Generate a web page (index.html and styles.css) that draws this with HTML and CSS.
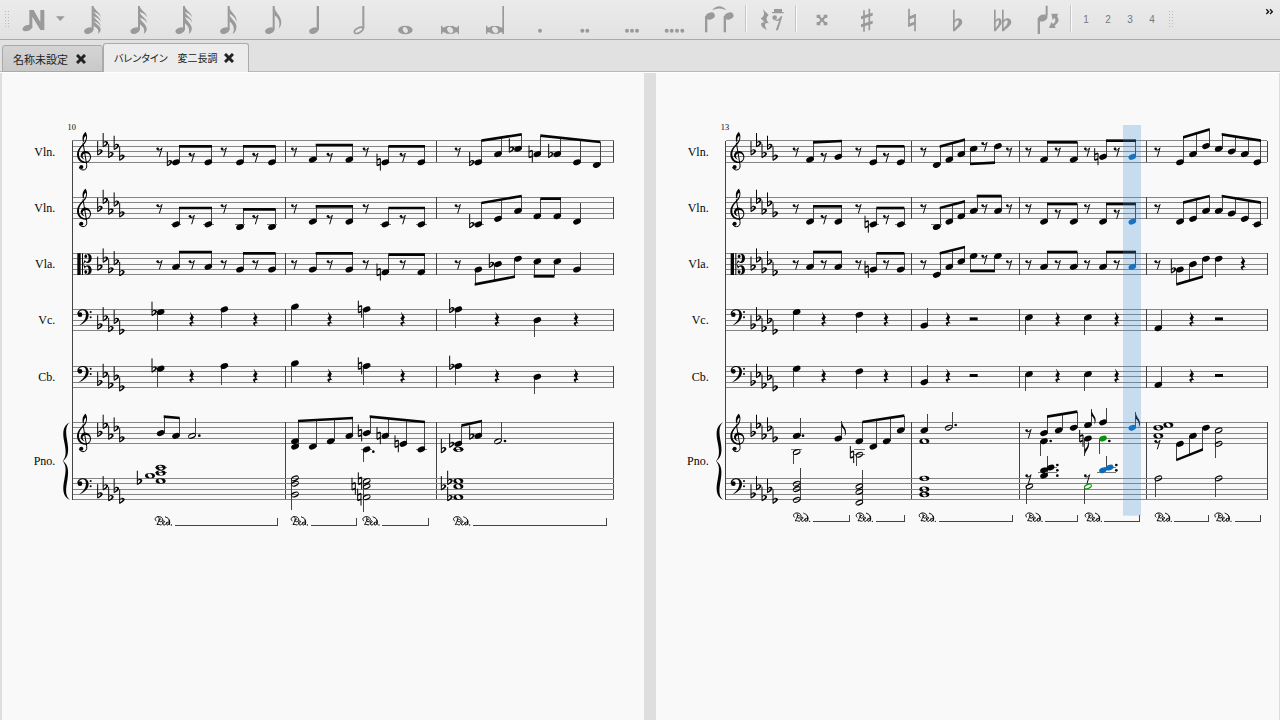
FILE: index.html
```
<!DOCTYPE html>
<html lang="ja">
<head>
	<meta charset="utf-8">
	<title>バレンタイン 変二長調</title>
	<link rel="stylesheet" href="styles.css">
</head>

<body>
<!-- shared glyphs, three units to a pixel -->
<svg class="glyphs" aria-hidden="true">
	<symbol id="treble" overflow="visible">
		<path class="line" stroke-width="3" d="M-3,6 L8,72 C10,83 4,88 -3,88 C-9,88 -14,84 -14,79"/>
		<path d="M-3,3 C-7,-11 -2,-22 5,-26 C12,-15 10,0 2,9 C-6,18 -15,26 -15,41 C-15,55 -5,63 5,63 C14,63 18,57 18,50 C18,42 12,38 6,38 C-1,38 -5,43 -4,48 C-3,53 0,55 3,57 C-6,55 -11,49 -10,43 C-9,35 -2,30 6,31 C15,32 21,39 21,49 C21,59 14,67 3,67 C-10,67 -21,56 -21,42 C-21,26 -10,17 -3,9 C4,2 8,-7 6,-14 C0,-12 -1,-4 0,3 Z"/>
		<circle cx="-8" cy="79" r="6"/>
	</symbol>
	<symbol id="bass" overflow="visible">
		<circle cx="-12" cy="16" r="7"/>
		<path d="M-20,15 C-20,3 -9,-1 -2,0 C9,1 14,8 14,18 C13,34 -1,44 -18,50 C-4,41 5,31 6,16 C6,7 2,3 -4,3 C-11,3 -16,8 -17,15 Z"/>
		<circle cx="20" cy="8" r="3"/><circle cx="20" cy="24" r="3"/>
	</symbol>
	<symbol id="alto" overflow="visible">
		<path d="M-20,0 h10 v65 h-10z M-6,0 h3 v65 h-3z"/>
		<path id="alto-half" d="M1,9 C3,-2 23,-3 23,14 C23,28 11,33 4,26 L-3,33 L2,19 C7,29 14,27 14,14 C14,3 9,1 6,4 C12,7 10,14 5,14 C2,14 1,12 1,9z"/>
		<use href="#alto-half" transform="translate(0,65) scale(1,-1)"/>
	</symbol>
	<symbol id="flat" overflow="visible">
		<path class="line" stroke-width="3" d="M-6,-31 V11"/>
		<path d="M-6,-2 C-2,-9 9,-8 9,-1 C9,4 0,9 -6,12 V8 C-1,5 3,2 3,-1 C3,-5 -3,-4 -6,2z"/>
	</symbol>
	<symbol id="natural" overflow="visible">
		<path class="line" stroke-width="3" d="M-5,-26 V10 M5,-11 V25"/>
		<path class="line" stroke-width="5" d="M-5,-7 L5,-11 M-5,10 L5,6"/>
	</symbol>
	<symbol id="rest8" overflow="visible">
		<circle cx="-5" cy="-8" r="4"/>
		<path class="line" stroke-width="3" d="M-6,-5 C0,-2 5,-6 8,-11 L0,16"/>
	</symbol>
	<symbol id="rest4" overflow="visible">
		<path d="M-4,-23 L7,-8 C1,-1 1,4 9,11 C0,8 -4,12 2,20 C-9,15 -10,4 1,6 L-7,-5 C-1,-10 0,-15 -5,-22z"/>
	</symbol>
	<symbol id="head" overflow="visible"><ellipse rx="12" ry="8" transform="rotate(-24)"/></symbol>
	<symbol id="halfhead" overflow="visible"><path fill-rule="evenodd" transform="rotate(-24)" d="M-12,0 a12,8 0 1,0 24,0 a12,8 0 1,0 -24,0z M-10,0 a10,4 0 1,0 20,0 a10,4 0 1,0 -20,0z"/></symbol>
	<symbol id="whole" overflow="visible"><path fill-rule="evenodd" d="M-15,0 a15,8 0 1,0 30,0 a15,8 0 1,0 -30,0z M-7,-3 C-5,-9 5,-7 7,3 C5,9 -6,7 -7,-3z"/></symbol>
	<symbol id="flag" overflow="visible"><path d="M0,0 C2,17 13,21 13,34 C13,40 11,44 9,47 C13,31 5,23 0,20z"/></symbol>
	<symbol id="ped" overflow="visible">
		<path class="line" stroke-width="3" d="M4,-13 C-2,-16 0,-25 9,-26 C19,-27 26,-20 22,-14 C19,-9 12,-10 12,-15 C12,-19 17,-20 19,-17 M11,-24 C16,-16 8,-8 6,-2 C10,-6 15,1 20,-2"/>
		<path class="line" stroke-width="3" d="M22,-6 C27,-6 31,-12 27,-14 C21,-13 21,0 28,-1 C32,-2 34,-6 36,-10 M43,-8 C38,-14 33,-5 36,-1 C41,1 45,-9 42,-17 C40,-23 34,-23 30,-26 M42,-17 C46,-12 43,-4 43,-1"/>
		<circle cx="49" cy="-1" r="2"/>
	</symbol>
	<symbol id="bigflag" overflow="visible"><path d="M0,0 C3,14 22,20 22,34 C17,25 9,20 0,18z"/></symbol>
</svg>

<div class="toolbar" role="toolbar" aria-label="音符入力">
	<span class="grip"></span>
	<button class="input-mode" aria-label="音符入力モード"><svg viewBox="0 0 105 120"><ellipse cx="34" cy="84" rx="15" ry="9" transform="rotate(-20 34 84)"/><path d="M40,30 H53 L73,66 V30 H85 V90 H73 L49,50 V84 H40z"/></svg></button>
	<button class="arrow" aria-label="入力方法"><svg viewBox="0 0 54 120"><path d="M15,49 H41 L28,63z"/></svg></button>
	<button class="tool" aria-label="64分音符"><svg viewBox="0 0 135 120"><ellipse cx="59" cy="92" rx="14" ry="9" transform="rotate(-20 59 92)"/><path d="M68,18 h6 v72 h-6z"/><use href="#bigflag" x="73" y="17"/><use href="#bigflag" x="73" y="31"/><use href="#bigflag" x="73" y="45"/><path d="M73,59 C78,72 98,78 95,91 Q94,98 87,102 C92,86 80,82 73,77z"/></svg></button>
	<button class="tool" aria-label="32分音符"><svg viewBox="0 0 135 120"><ellipse cx="63" cy="92" rx="14" ry="9" transform="rotate(-20 63 92)"/><path d="M72,18 h6 v72 h-6z"/><use href="#bigflag" x="77" y="18"/><use href="#bigflag" x="77" y="35"/><path d="M77,52 C80,66 102,76 98,90 Q97,98 89,102 C96,84 81,76 77,72z"/></svg></button>
	<button class="tool" aria-label="16分音符"><svg viewBox="0 0 135 120"><ellipse cx="63" cy="92" rx="14" ry="9" transform="rotate(-20 63 92)"/><path d="M72,18 h6 v72 h-6z"/><use href="#bigflag" x="77" y="18"/><use href="#bigflag" x="77" y="33"/><path d="M77,48 C80,63 102,73 98,89 Q97,98 89,102 C96,84 81,73 77,69z"/></svg></button>
	<button class="tool" aria-label="8分音符（付き）"><svg viewBox="0 0 135 120"><ellipse cx="62" cy="92" rx="14" ry="9" transform="rotate(-20 62 92)"/><path d="M71,18 h6 v72 h-6z"/><path d="M76,20 C78,37 99,43 98,65 C92,50 83,44 76,41z M76,42 C79,58 101,66 97,84 Q95,97 86,102 C97,81 81,68 76,64z"/></svg></button>
	<button class="tool" aria-label="8分音符"><svg viewBox="0 0 135 120"><ellipse cx="62" cy="92" rx="14" ry="9" transform="rotate(-20 62 92)"/><path d="M71,18 h6 v72 h-6z"/><path d="M76,20 C78,38 97,46 97,68 Q97,77 89,86 C97,64 84,50 76,46z"/></svg></button>
	<button class="tool" aria-label="4分音符"><svg viewBox="0 0 135 120"><ellipse cx="59" cy="92" rx="14" ry="9" transform="rotate(-20 59 92)"/><path d="M68,18 h7 v72 h-7z"/></svg></button>
	<button class="tool" aria-label="2分音符"><svg viewBox="0 0 135 120"><ellipse class="ring" cx="59" cy="91" rx="14" ry="7" transform="rotate(-28 59 91)"/><path d="M70,18 h6 v68 h-6z"/></svg></button>
	<button class="tool" aria-label="全音符"><svg viewBox="0 0 135 120"><path fill-rule="evenodd" d="M42,90 a22,13 0 1,0 44,0 a22,13 0 1,0 -44,0z M56,87 C58,76 70,81 72,92 C70,104 58,99 56,87z"/></svg></button>
	<button class="tool" aria-label="倍全音符"><svg viewBox="0 0 135 120"><path fill-rule="evenodd" d="M36,77 h4 v5 Q49,83 53,78 H73 Q77,83 86,82 v-5 h4 v25 h-4 v-5 Q77,95 73,101 H53 Q49,95 40,97 v5 h-4z M54,87 C55,77 70,78 73,92 C71,103 56,101 54,87z"/></svg></button>
	<button class="tool" aria-label="ロンガ"><svg viewBox="0 0 135 120"><path fill-rule="evenodd" d="M36,77 h4 v5 Q49,83 53,78 H73 Q77,83 85,82 V18 h5 V102 h-5 v-5 Q77,95 73,101 H53 Q49,95 40,97 v5 h-4z M54,87 C55,77 70,78 73,92 C71,103 56,101 54,87z"/></svg></button>
	<button class="tool" aria-label="付点"><svg viewBox="0 0 135 120"><circle cx="63" cy="92" r="6"/></svg></button>
	<button class="tool" aria-label="複付点"><svg viewBox="0 0 135 120"><circle cx="55" cy="92" r="6"/><circle cx="70" cy="92" r="6"/></svg></button>
	<button class="tool" aria-label="三重付点"><svg viewBox="0 0 135 120"><circle cx="54" cy="92" r="6"/><circle cx="69" cy="92" r="6"/><circle cx="84" cy="92" r="6"/></svg></button>
	<button class="tool" aria-label="四重付点"><svg viewBox="0 0 135 120"><circle cx="38" cy="92" r="6"/><circle cx="53" cy="92" r="6"/><circle cx="69" cy="92" r="6"/><circle cx="85" cy="92" r="6"/></svg></button>
	<button class="tool" aria-label="タイ"><svg viewBox="0 0 135 120"><ellipse cx="34" cy="48" rx="14" ry="10" transform="rotate(-20 34 48)"/><ellipse cx="90" cy="48" rx="14" ry="10" transform="rotate(-20 90 48)"/><path d="M18,48 h7 v49 h-7z M74,48 h7 v49 h-7z M39,31 Q60,7 83,31 Q61,20 39,31z"/></svg></button>
	<span class="sep"></span>
	<button class="tool" aria-label="休符"><svg viewBox="0 0 135 120"><path d="M41,27 L59,45 C50,54 51,60 60,70 C47,66 44,74 54,90 C34,83 30,65 47,67 L35,55 C46,48 48,40 41,27z M75,27 h24 v9 h5 v4 h-35 v-4 h6z"/><circle cx="77" cy="53" r="7"/><path d="M76,60 C84,62 91,57 95,49 h5 L87,91 h-7 L91,61 Q85,66 76,60z"/></svg></button>
	<span class="sep"></span>
	<button class="tool" aria-label="ダブルシャープ"><svg viewBox="0 0 135 120"><path d="M53,44 h11 v6 l5,5 5,-5 v-6 h11 v10 h-6 l-5,6 5,6 h6 v10 h-11 v-6 l-5,-6 -5,6 v6 h-11 v-10 h6 l5,-6 -5,-6 h-6z"/></svg></button>
	<button class="tool" aria-label="シャープ"><svg viewBox="0 0 135 120"><path class="ring" d="M60,31 V95 M76,26 V91"/><path d="M51,49 L86,38 V47 L51,58z M51,73 L86,62 V71 L51,82z"/></svg></button>
	<button class="tool" aria-label="ナチュラル"><svg viewBox="0 0 135 120"><path class="ring" d="M60,26 V79 M78,42 V94"/><path d="M58,50 L80,42 V51 L58,59z M58,72 L80,64 V73 L58,81z"/></svg></button>
	<button class="tool" aria-label="フラット"><svg viewBox="0 0 135 120"><path fill-rule="evenodd" d="M57,29 h5 v32 C68,51 85,53 85,66 C84,78 70,84 62,94 h-5z M62,69 V84 C69,78 74,71 74,65 C73,58 65,61 62,69z"/></svg></button>
	<button class="tool" aria-label="ダブルフラット"><svg viewBox="0 0 135 120"><path fill-rule="evenodd" d="M45,29 h5 v32 C56,51 68,53 68,66 C67,78 56,84 50,94 h-5z M50,69 V84 C56,78 60,71 60,65 C59,58 52,61 50,69z"/><path fill-rule="evenodd" d="M69,29 h5 v32 C80,51 97,53 97,66 C96,78 82,84 74,94 h-5z M74,69 V84 C81,78 86,71 86,65 C85,58 77,61 74,69z"/></svg></button>
	<button class="tool" aria-label="符幹の反転"><svg viewBox="0 0 135 120"><ellipse cx="56" cy="54" rx="15" ry="10" transform="rotate(-20 56 54)"/><path d="M41,54 h7 v48 h-7z M65,17 h6 v30 h-6z M82,41 L103,41 99,49 Q112,62 92,77 L95,84 L75,84 L82,67 L87,72 Q99,63 91,54 L86,60z"/></svg></button>
	<span class="sep"></span>
	<button class="voice">1</button>
	<button class="voice">2</button>
	<button class="voice">3</button>
	<button class="voice">4</button>
	<span class="grip grip-end"></span>
	<button class="more" aria-label="さらに表示"><svg viewBox="0 0 36 30"><path d="M7,7 L14,14 L7,21 M18,7 L25,14 L18,21"/></svg></button>
</div>

<div class="tabs" role="tablist">
	<div class="tab">
		<button class="tab-name" role="tab">名称未設定</button>
		<button class="close" aria-label="閉じる"><svg viewBox="0 0 10 10"><path d="M1,1 L9,9 M9,1 L1,9"/></svg></button>
	</div>
	<div class="tab active">
		<button class="tab-name" role="tab" aria-selected="true">バレンタイン　変二長調</button>
		<button class="close" aria-label="閉じる"><svg viewBox="0 0 10 10"><path d="M1,1 L9,9 M9,1 L1,9"/></svg></button>
	</div>
</div>

<main class="view">
	<section class="page page-left"><svg id="page1" class="score" viewBox="6 219 1926 1941"></svg></section>
	<section class="page page-right"><svg id="page2" class="score" viewBox="1968 219 1869 1941"></svg></section>
</main>

<script src="score.js"></script>
</body>
</html>
```
FILE: styles.css
```
* {
	box-sizing: border-box;
}
body {
	margin: 0;
	height: 100vh;
	display: flex;
	flex-direction: column;
	overflow: hidden;
	background-color: #dedede;
	font-family: "Noto Sans CJK JP", sans-serif;
	color: #222;
}
button {
	margin: 0;
	padding: 0;
	border: 0;
	background: none;
	font: inherit;
	color: inherit;
}
.glyphs {
	position: absolute;
	width: 0;
	height: 0;
}

/* toolbar */
.toolbar {
	display: flex;
	flex: none;
	height: 40px;
	align-items: stretch;
	background: linear-gradient(#ebebeb, #e2e2e2);
	border-bottom: 1px solid #a9a9a9;
	color: #9a9a9a;
}
.toolbar svg {
	display: block;
	height: 40px;
	width: 100%;
	fill: currentColor;
}
.toolbar .ring {
	fill: none;
	stroke: currentColor;
	stroke-width: 5px;
}
.grip {
	width: 6px;
	height: 18px;
	margin: 10px 6px 0 4px;
	background-image: radial-gradient(circle, #bbb 1px, transparent 1px);
	background-size: 3px 3px;
}
.grip-end {
	margin-left: 6px;
}
.input-mode {
	width: 35px;
}
.arrow {
	width: 18px;
}
.tool {
	width: 45px;
	flex: none;
}
.sep {
	width: 2px;
	height: 27px;
	margin: 5px 2px 0 1px;
	background-color: #fafafa;
	border-left: 1px solid #c6c6c6;
}
.voice {
	width: 22px;
	height: 38px;
	flex: none;
	padding-left: 2px;
	font-family: "Liberation Sans", sans-serif;
	font-size: 10px;
	color: #777;
}
.toolbar .more {
	width: 16px;
	margin-left: auto;
}
.toolbar .more svg {
	width: 12px;
	height: 10px;
	margin-bottom: 15px;
	fill: none;
	stroke: #111;
	stroke-width: 4px;
}

/* document tabs */
.tabs {
	display: flex;
	flex: none;
	height: 33px;
	align-items: flex-end;
	padding-left: 2px;
	background-color: #e1e1e1;
	border-bottom: 1px solid #fff;
	box-shadow: inset 0 -1px #b8b8b8;
}
.tab {
	display: flex;
	align-items: center;
	gap: 8px;
	height: 27px;
	padding: 0 16px 0 10px;
	border: 1px solid #aaa;
	border-radius: 3px 3px 0 0;
	background: linear-gradient(#d4d4d4, #c9c9c9);
}
.tab.active {
	height: 29px;
	padding-right: 14px;
	border-bottom: 0;
	background: #ececec;
}
.tab-name {
	font-size: 11px;
	line-height: 16px;
	font-feature-settings: "palt";
	white-space: nowrap;
}
.active .tab-name {
	font-size: 10px;
}
.close svg {
	display: block;
	width: 10px;
	height: 10px;
	fill: none;
	stroke: #222;
	stroke-width: 3px;
}
.active {
	gap: 6px;
}

/* score pages */
.view {
	display: flex;
	flex: 1;
	min-height: 0;
	gap: 12px;
	padding: 0 1px 0 2px;
}
.page {
	min-width: 0;
	overflow: hidden;
	background-color: #f9f9f9;
}
.page-left {
	flex: 642;
}
.page-right {
	flex: 623;
}
.score {
	display: block;
	width: 100%;
	fill: currentColor;
	color: #050505;
}
.line {
	fill: none;
	stroke: currentColor;
}
.staff {
	stroke: #858585;
	stroke-width: 3px;
	shape-rendering: crispEdges;
}
.bar, .stem, .ledger, .pedal {
	fill: none;
	stroke: #444;
	stroke-width: 3px;
	shape-rendering: crispEdges;
}
.ledger {
	stroke: #777;
}
.playing {
	color: #0c68b8;
	fill: currentColor;
}
.picked {
	color: #0a930a;
	fill: currentColor;
}
.part {
	font-family: "Liberation Serif", serif;
	font-size: 36px;
	text-anchor: end;
}
.number {
	font-family: "Liberation Serif", serif;
	font-size: 25px;
	text-anchor: middle;
}
.cursor {
	fill: #4493d6;
	fill-opacity: .27;
}
```
FILE: score.js
```
// Three units to a pixel. Steps count down from the top line of a staff.
var TOPS = [422, 592, 760, 928, 1098, 1267, 1435];
var STEP = 8.1;
var CLEFS = ["treble", "treble", "alto", "bass", "bass", "treble", "bass"];
var KEY = { treble: [4, 1, 5, 2, 6], alto: [5, 2, 6, 3, 7], bass: [6, 3, 7, 4, 8] };
var NAMES = ["Vln.", "Vln.", "Vla.", "Vc.", "Cb."];

/* @ n            x offset for what follows
   r8 x step, r4 x, r2 x    rests
   beam u|d y1 y2 notes     notes under one beam
   q|e|h u|d y notes        stem ending at y
   w notes, flat/nat x step, dot x y
   a note is x:step+step, then b/n for an accidental, * playing, ~ picked */
var low1 = "@60;q d 64 422:1b;r4 515;q d 57 613:0;r4 706;q d 50 825:-1;r4 929;@960;r4 29;q d 57 140:0n;r4 248;q d 57 415:0b;r4 531;q d 83 652:4;r4 768".replace("r4 29;", "");
var low2 = "@2040;q d 64 350:1;r4 431;q d 70 538:2;r4 618;q u -4 733:6;r4 804;r2 881;@2940;q d 76 147:3;r4 233;q d 76 324:3;r4 410;q u 2 535:7;r4 635;r2 717";

var PAGES = [
	{
		id: "page1", left: 217, number: 10, bars: [856, 1309, 1841], pedalY: 1576,
		pedals: [[465, 525, 833], [873, 933, 1068], [1088, 1147, 1286], [1360, 1420, 1819]],
		staves: [
			"@60;r8 418 4;beam u 17 17 468:8b 565:8;r8 515 6;r8 611 4;beam u 17 17 660:8 756:8;r8 706 6;r8 822 4;beam u 13 13 878:7 988:7;r8 929 6;@960;r8 137 4;beam u 17 17 196:8n 304:8;r8 248 6;r8 413 4;beam u 0 -19 475:8b 534:5 594:3b;beam u -15 4 652:5n 712:5b 771:8 830:9",
			"@60;r8 418 4;beam u 32 32 468:10 565:10;r8 515 8;r8 611 4;beam u 36 36 660:11 756:11;r8 706 8;r8 822 4;beam u 27 27 878:9 988:9;r8 929 8;@960;r8 137 4;beam u 32 32 196:10 304:10;r8 248 8;r8 413 4;beam u 17 -4 475:10b 534:8 594:5;beam u 4 4 652:7 712:7;q u 16 771:9",
			"@60;r8 418 4;beam u -4 -4 468:5 565:5;r8 515 4;r8 611 4;beam u 0 0 660:6 756:6;r8 706 4;r8 822 4;beam u 0 0 878:6 988:6;r8 929 4;@960;r8 137 4;beam u 4 4 196:7n 304:7;r8 248 4;r8 413 4;beam d 93 70 475:6 534:4b 594:2;beam d 69 69 652:3 712:3;q u -5 771:6",
			low1,
			low1,
			"@60;beam u -17 -13 422:4 468:5;h u -12 516:5;dot 538 40;beam u -4 -13 825:7+9 878:9 932:7 988:5;@960;beam u -17 -1 140:4n 196:5n 250:8n 304:10;q d 119 140:10;dot 160 88;beam u 10 -4 415:8b 475:5b;w 415:10;flat 370 10;h u 0 534:7;dot 555 56",
			"@60;w 422:-4+-2+1;w 390:-1;flat 358 1;h d 95 825:0+2+6;@960;h d 101 140:1+3+7;nat 120 1;nat 101 3;nat 118 7;w 415:1+3+7;flat 389 1;flat 370 3;flat 389 7"
		]
	},
	{
		id: "page2", left: 2177, number: 13, bars: [2735, 3059, 3440, 3802], pedalY: 1565,
		pedals: [[2380, 2439, 2547], [2568, 2627, 2712], [2757, 2817, 3036], [3077, 3136, 3233], [3255, 3313, 3418], [3465, 3522, 3625], [3644, 3704, 3780]],
		staves: [
			"@2040;r8 347 4;beam u 5 1 390:7 475:6;r8 431 6;r8 535 4;beam u 17 17 580:8 662:8;r8 618 6;r8 730 4;beam u 18 -3 770:9 808:7 844:5;beam d 70 66 881:3 954:2;@2940;r8 13 2;r8 87 4;r8 145 4;beam u 5 5 192:7 281:7;r8 233 4;r8 321 4;beam u 0 0 369:6n 457:6*;r8 410 4;r8 532 4;beam u -10 -34 600:8 639:5 678:2;beam u -19 0 716:3 755:4 794:5 832:8",
			"@2040;r8 347 4;beam u 27 27 390:9 475:9;r8 431 8;r8 535 4;beam u 32 32 580:10n 662:10;r8 618 8;r8 730 4;beam u 32 12 770:11 808:9 844:7;beam u -4 -4 881:5 954:5;@2940;r8 13 4;r8 87 4;r8 145 4;beam u 20 20 192:9 281:9;r8 233 6;r8 321 4;beam u 20 20 369:9 457:9*;r8 410 6;r8 532 4;beam u 16 -4 600:9 639:8 678:5;beam u -4 16 716:5 755:6 794:8 832:10",
			"@2040;r8 347 4;beam u -4 -4 390:5 475:5;r8 431 4;r8 535 4;beam u 0 0 580:6n 662:6;r8 618 4;r8 730 4;beam u 0 -19 770:8 808:5 844:3;beam d 53 53 881:1 954:1;@2940;r8 13 2;r8 87 4;r8 145 4;beam u -4 -4 192:5 281:5;r8 233 4;r8 321 4;beam u -4 -4 369:5 457:5*;r8 410 4;r8 532 4;beam d 93 70 600:6b 639:4 678:2;q d 70 716:2;r4 789",
			low2,
			low2,
			"@2040;q u -12 350:5;dot 369 40;h d 124 350:11;e u -5 475:6;beam u -1 -20 538:7 580:9 620:7 662:3;h d 132 538:12;nat 516 12;q u -25 733:3;w 733:7;h u -31 806:2;dot 827 8;@2940;r8 145 4;beam u -17 -32 192:4 236:3 281:2;q d 100 192:7;dot 212 56;e u -40 324:1;q u -43 369:0;e d 101 324:6n;q d 95 369:6~;dot 388 56;e u -31 457:2*;w 535:2+5;w 565:1;r8 532 8;beam d 113 81 600:8 639:5 678:2;h d 106 716:3+8",
			"@2040;h u -30 350:2+4+8;h u -24 538:3+5+9;w 733:0+4+6;@2940;r8 145 0;h d 77 148:3;q u -66 192:-1+-3;q u -66 212:-4;dot 232 -40;dot 232 -24;dot 232 -8;r8 321 0;h d 77 324:3~;q u -66 369:-3*;q u -66 389:-4*;dot 409 -40;dot 409 -24;h d 57 535:0;h d 57 716:0"
		]
	}
];

var HEADS = { q: "head", e: "head", h: "halfhead", w: "whole" };

function line(cls, x1, y1, x2, y2) {
	return '<path class="' + cls + '" d="M' + x1 + ',' + y1 + ' L' + x2 + ',' + y2 + '"/>';
}
function glyph(id, x, y, cls) {
	return '<use href="#' + id + '" x="' + x + '" y="' + y + '"' + (cls ? ' class="' + cls + '"' : '') + '/>';
}
function readNote(text, off) {
	var m = text.match(/^(\d+):([-+\d]+)([bn]?)([*~]?)$/);
	return {
		x: +m[1] + off,
		steps: m[2].split(/\+/).map(Number),
		acc: m[3],
		cls: m[4] == "*" ? "playing" : m[4] == "~" ? "picked" : ""
	};
}
function heads(n, kind, top) {
	var out = "";
	n.steps.forEach(function (p) {
		var i;
		for (i = 10; i <= p; i += 2) out += line("ledger", n.x - 16, top + i * STEP, n.x + 16, top + i * STEP);
		for (i = -2; i >= p; i -= 2) out += line("ledger", n.x - 18, top + i * STEP, n.x + 18, top + i * STEP);
		out += glyph(HEADS[kind], n.x, top + p * STEP, n.cls);
		if (n.acc) out += glyph(n.acc == "b" ? "flat" : "natural", n.x - 20, top + p * STEP);
	});
	return out;
}
// the stem starts at the head farthest from its end
function stem(n, dir, top, end) {
	var p = dir == "u" ? Math.max.apply(null, n.steps) : Math.min.apply(null, n.steps);
	var x = n.x + (dir == "u" ? 10 : -10);
	return line("stem", x, top + p * STEP, x, end);
}
function beam(w, off, top) {
	var dir = w[1], y1 = top + +w[2], y2 = top + +w[3];
	var notes = w.slice(4).map(function (t) { return readNote(t, off); });
	var d = dir == "u" ? 10 : -10;
	var a = notes[0].x + d, b = notes[notes.length - 1].x + d;
	var out = "";
	notes.forEach(function (n) {
		out += stem(n, dir, top, y1 + (y2 - y1) * (n.x + d - a) / (b - a)) + heads(n, "q", top);
	});
	a -= 1;
	b += 1;
	return out + '<path d="M' + a + ',' + (y1 - 4) + ' L' + b + ',' + (y2 - 4) + ' V' + (y2 + 4) + ' L' + a + ',' + (y1 + 4) + 'z"/>';
}
function drawStaff(text, top) {
	var off = 0, out = "";
	text.split(";").forEach(function (item) {
		var w = item.split(" "), c = w[0], x = +w[1] + off, n, end;
		if (c.charAt(0) == "@") off = +c.slice(1);
		else if (c == "r8") out += glyph("rest8", x, top + w[2] * STEP);
		else if (c == "r4") out += glyph("rest4", x, top + 32);
		else if (c == "r2") out += '<rect x="' + (x - 12) + '" y="' + (top + 24) + '" width="24" height="9"/>';
		else if (c == "dot") out += '<circle cx="' + x + '" cy="' + (top + +w[2]) + '" r="4"/>';
		else if (c == "flat") out += glyph("flat", x, top + w[2] * STEP);
		else if (c == "nat") out += glyph("natural", x, top + w[2] * STEP);
		else if (c == "beam") out += beam(w, off, top);
		else if (c == "w") out += heads(readNote(w[1], off), "w", top);
		else {
			n = readNote(w[3], off);
			end = top + +w[2];
			// a head on the far side of the stem hangs from its left
			if (n.steps[0] == -4) out += line("stem", n.x - 10, top - 32, n.x - 10, end);
			else out += stem(n, w[1], top, end);
			out += heads(n, c, top);
			if (c == "e") out += w[1] == "u" ? glyph("flag", n.x + 10, end)
				: '<g transform="translate(' + (n.x - 10) + ',' + end + ') scale(1,-1)">' + glyph("flag", 0, 0) + '</g>';
		}
	});
	return out;
}
function drawPage(page) {
	var out = "", left = page.left, right = page.bars[page.bars.length - 1];
	TOPS.forEach(function (top, i) {
		for (var k = 0; k < 5; k++) out += line("staff", left, top + k * 16.2, right, top + k * 16.2);
		out += glyph(CLEFS[i], left + 35, top);
		KEY[CLEFS[i]].forEach(function (p, k) {
			out += glyph("flat", left + 82 + k * 16.5, top + p * STEP);
		});
		page.bars.forEach(function (x) {
			if (i < 6) out += line("bar", x, top, x, i == 5 ? TOPS[6] + 65 : top + 65);
		});
		if (NAMES[i]) out += '<text class="part" x="' + (left - 51) + '" y="' + (top + 45) + '">' + NAMES[i] + '</text>';
		out += drawStaff(page.staves[i], top);
	});
	out += '<text class="part" x="' + (left - 51) + '" y="1394">Pno.</text>';
	out += '<text class="number" x="' + (left - 2) + '" y="391">' + page.number + '</text>';
	out += line("bar", left, TOPS[0], left, TOPS[6] + 65);
	out += '<path transform="translate(' + (left - 7) + ',1267)" d="M0,0 C-16,10 -12,36 -8,58 C-4,82 -3,103 -21,116 C-3,130 -4,150 -8,174 C-12,196 -16,222 0,233 C-24,222 -22,196 -17,172 C-12,146 -10,130 -22,116 C-10,103 -12,84 -17,60 C-22,36 -24,10 0,0z"/>';
	page.pedals.forEach(function (p) {
		out += glyph("ped", p[0], page.pedalY);
		out += '<path class="pedal" d="M' + p[1] + ',' + page.pedalY + ' H' + p[2] + ' v-21"/>';
	});
	if (page.id == "page2") out += '<rect class="cursor" x="3369" y="375" width="54" height="1172"/>';
	document.getElementById(page.id).innerHTML = out;
}

PAGES.forEach(drawPage);
```
